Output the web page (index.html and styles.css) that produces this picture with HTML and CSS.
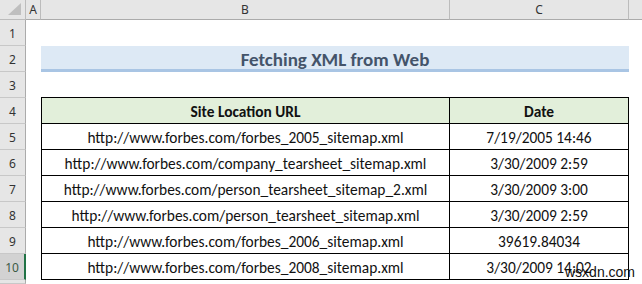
FILE: index.html
```html
<!DOCTYPE html>
<html>
<head>
<meta charset="utf-8">
<link rel="stylesheet" href="styles.css">
</head>
<body>
<div class="sheet">
  <div class="corner"><svg width="14" height="13" viewBox="0 0 14 13"><polygon points="13,0 13,12 0,12" fill="#bfbfbf"/></svg></div>
  <div class="ch">A</div>
  <div class="ch">B</div>
  <div class="ch">C</div>
  <div class="ch last"></div>

  <div class="rh">1</div><div class="c"></div><div class="c"></div><div class="c"></div><div class="c"></div>

  <div class="rh">2</div><div class="c"></div><div class="title">Fetching XML from Web</div><div class="c"></div>

  <div class="rh">3</div><div class="c"></div><div class="c above"></div><div class="c above"></div><div class="c"></div>

  <div class="rh">4</div><div class="c"></div><div class="t tb th">Site Location URL</div><div class="t tc th">Date</div><div class="c"></div>

  <div class="rh">5</div><div class="c"></div><div class="t tb">http://www.forbes.com/forbes_2005_sitemap.xml</div><div class="t tc">7/19/2005 14:46</div><div class="c"></div>
  <div class="rh">6</div><div class="c"></div><div class="t tb">http://www.forbes.com/company_tearsheet_sitemap.xml</div><div class="t tc">3/30/2009 2:59</div><div class="c"></div>
  <div class="rh">7</div><div class="c"></div><div class="t tb">http://www.forbes.com/person_tearsheet_sitemap_2.xml</div><div class="t tc">3/30/2009 3:00</div><div class="c"></div>
  <div class="rh">8</div><div class="c"></div><div class="t tb">http://www.forbes.com/person_tearsheet_sitemap.xml</div><div class="t tc">3/30/2009 2:59</div><div class="c"></div>
  <div class="rh">9</div><div class="c"></div><div class="t tb">http://www.forbes.com/forbes_2006_sitemap.xml</div><div class="t tc">39619.84034</div><div class="c"></div>
  <div class="rh sel">10</div><div class="c"></div><div class="t tb">http://www.forbes.com/forbes_2008_sitemap.xml</div><div class="t tc">3/30/2009 14:02</div><div class="c"></div>

  <div class="rh"></div><div class="c"></div><div class="c"></div><div class="c"></div><div class="c"></div>
</div>
<div class="wm">wsxdn.com</div>
</body>
</html>
```
FILE: styles.css
```css
* { box-sizing: border-box; }
html, body { margin: 0; padding: 0; background: #fff; }
body { width: 642px; height: 284px; overflow: hidden; position: relative; }

.sheet {
  display: grid;
  grid-template-columns: 26px 15px 409px 179px 1fr;
  grid-template-rows: 20px repeat(10, 26px) 1fr;
  height: 284px;
  font-family: Carlito, Lato, "Liberation Sans", sans-serif;
  font-size: 15.4px;
  color: #111;
}

.corner {
  background: #e6e6e6;
  border-right: 1px solid #bcbcbc;
  border-bottom: 1px solid #bcbcbc;
  display: flex;
  align-items: flex-end;
  justify-content: flex-end;
  padding: 0 3px 3px 0;
}

.ch {
  background: #e6e6e6;
  border-right: 1px solid #bcbcbc;
  border-bottom: 1px solid #ababab;
  font-family: "Noto Sans", "Open Sans", sans-serif;
  font-size: 12px;
  color: #333;
  display: flex;
  align-items: center;
  justify-content: center;
}
.ch.last { border-right: none; }

.rh {
  background: #e6e6e6;
  border-right: 1px solid #ababab;
  border-bottom: 1px solid #c8c8c8;
  font-family: "Noto Sans", "Open Sans", sans-serif;
  font-size: 12px;
  color: #333;
  display: flex;
  align-items: center;
  justify-content: center;
  padding-top: 2px;
}
.rh.sel {
  background: #d2d2d2;
  color: #3c5a45;
  border-right: 2px solid #217346;
}

.c { background: #fff; }
.c.above { border-bottom: 1px solid #000; }

.title {
  grid-column: span 2;
  background: #dde9f5;
  border-bottom: 3px solid #a9c5e4;
  color: #44546a;
  font-weight: bold;
  font-size: 19px;
  display: flex;
  align-items: center;
  justify-content: center;
  padding-top: 3px;
}

.t {
  border-bottom: 1px solid #000;
  border-right: 1px solid #000;
  display: flex;
  align-items: center;
  justify-content: center;
  padding-top: 2px;
  white-space: nowrap;
}
.tb { border-left: 1px solid #000; }
.th { background: #e2efda; font-weight: bold; }

.wm {
  position: absolute;
  left: 565px;
  top: 264px;
  font-family: "Liberation Sans", Arial, sans-serif;
  font-size: 14px;
  color: #111;
  line-height: 16px;
}
```
